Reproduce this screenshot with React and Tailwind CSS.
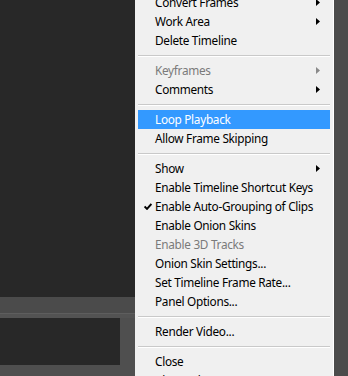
import React from "react";

const items = [
  { label: "Convert Frames", sub: true },
  { label: "Work Area", sub: true },
  { label: "Delete Timeline" },
  { sep: true },
  { label: "Keyframes", sub: true, disabled: true },
  { label: "Comments", sub: true },
  { sep: true },
  { label: "Loop Playback", active: true },
  { label: "Allow Frame Skipping" },
  { sep: true },
  { label: "Show", sub: true },
  { label: "Enable Timeline Shortcut Keys" },
  { label: "Enable Auto-Grouping of Clips", checked: true },
  { label: "Enable Onion Skins" },
  { label: "Enable 3D Tracks", disabled: true },
  { label: "Onion Skin Settings..." },
  { label: "Set Timeline Frame Rate..." },
  { label: "Panel Options..." },
  { sep: true },
  { label: "Render Video..." },
  { sep: true },
  { label: "Close" },
  { label: "Close Tab Group" },
];

function Arrow({ disabled }) {
  return (
    <svg width="4" height="7" viewBox="0 0 4 7" className="absolute right-[10px] top-[6px]">
      <path d="M0 0 L4 3.5 L0 7 Z" fill={disabled ? "#8a8a8a" : "#000"} />
    </svg>
  );
}

function Check() {
  return (
    <svg width="8" height="7" viewBox="0 0 8 7" className="absolute left-[6px] top-[6px]">
      <path d="M0.6 3.4 L3 5.9 L7.4 0.9" fill="none" stroke="#000" strokeWidth="1.9" />
    </svg>
  );
}

function MenuItem({ item }) {
  if (item.sep) {
    return (
      <div className="flex h-[11px] items-center px-[3px]">
        <div className="w-full border-t border-b border-t-[#c9c9c9] border-b-white" />
      </div>
    );
  }
  return (
    <div className="px-[3px]">
      <div
        className={`relative h-[19px] pl-[17px] leading-[19px] whitespace-nowrap ${
          item.active ? "bg-[#3399ff] text-white" : item.disabled ? "text-[#7a7a7a]" : "text-black"
        }`}
      >
        {item.checked ? <Check /> : null}
        {item.label}
        {item.sub ? <Arrow disabled={item.disabled} /> : null}
      </div>
    </div>
  );
}

export default function App() {
  return (
    <div
      className="flex h-[376px] w-[348px] overflow-hidden bg-[#282828]"
      style={{ fontFamily: '"Noto Sans", "Open Sans", sans-serif' }}
    >
      {/* left panel area */}
      <div className="flex w-[135px] shrink-0 flex-col">
        <div className="h-[297px] bg-[#282828]" />
        <div className="h-[16px] bg-[#4b4b4b]" />
        <div className="h-[5px] border-t border-[#5e5e5e] bg-[#535353]" />
        <div className="flex h-[47px]">
          <div className="w-[120px] bg-[#282828]" />
          <div className="flex-1 bg-[#4f4f4f]" />
        </div>
        <div className="flex-1 bg-[#4f4f4f]" />
      </div>

      {/* context menu */}
      <div className="w-[199px] shrink-0 overflow-hidden border-r border-white bg-[#f0f0f0] text-[11.8px] tracking-[-0.3px]">
        <div className="mt-[-7px]">
          {items.map((item, i) => (
            <MenuItem key={i} item={item} />
          ))}
        </div>
      </div>

      {/* right strip */}
      <div className="flex-1 bg-[#4b4b4b]" />
    </div>
  );
}
